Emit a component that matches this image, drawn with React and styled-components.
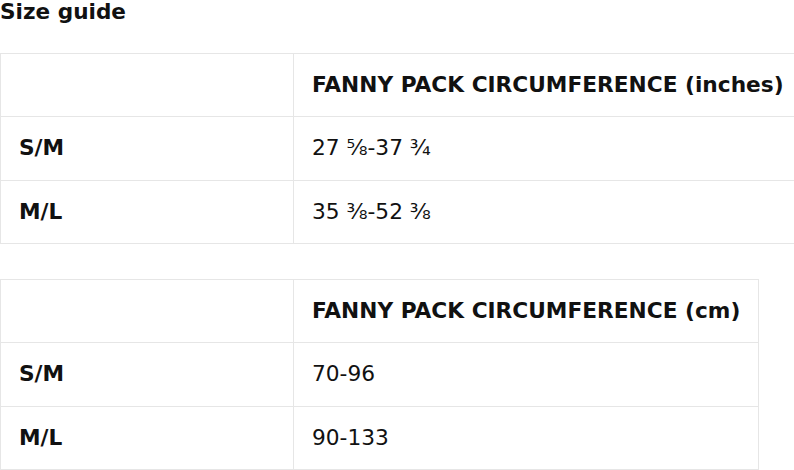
import React from "react";
import styled, { createGlobalStyle } from "styled-components";

const GlobalStyle = createGlobalStyle`
  body {
    margin: 0;
    background: #fff;
    color: #111;
    font-family: "DejaVu Sans", Verdana, sans-serif;
  }
`;

const Page = styled.div`
  display: flex;
  flex-direction: column;
  align-items: flex-start;
`;

const Title = styled.h3`
  margin: 0 0 29px;
  font-size: 21.6px;
  line-height: 24px;
  font-weight: bold;
`;

const Table = styled.table`
  border-collapse: collapse;
  margin-bottom: 35px;
  font-size: 21.7px;
  flex-shrink: 0;
`;

const Cell = styled.td`
  border: 1px solid #e6e6e6;
  padding: 16px 18px;
  line-height: 30.34px;
  text-align: left;
  white-space: nowrap;
  font-weight: ${(p) => (p.$bold ? "bold" : "normal")};
  width: ${(p) => (p.$first ? "256px" : "auto")};
  min-width: ${(p) => (p.$first ? "256px" : "0")};
`;

const guides = [
  {
    unit: "inches",
    rows: [
      ["S/M", "27 ⅝-37 ¾"],
      ["M/L", "35 ⅜-52 ⅜"],
    ],
  },
  {
    unit: "cm",
    rows: [
      ["S/M", "70-96"],
      ["M/L", "90-133"],
    ],
  },
];

function SizeTable({ unit, rows }) {
  return (
    <Table>
      <tbody>
        <tr>
          <Cell $first />
          <Cell $bold>FANNY PACK CIRCUMFERENCE ({unit})</Cell>
        </tr>
        {rows.map(([size, value]) => (
          <tr key={size}>
            <Cell $first $bold>
              {size}
            </Cell>
            <Cell>{value}</Cell>
          </tr>
        ))}
      </tbody>
    </Table>
  );
}

export default function App() {
  return (
    <Page>
      <GlobalStyle />
      <Title>Size guide</Title>
      {guides.map((g) => (
        <SizeTable key={g.unit} unit={g.unit} rows={g.rows} />
      ))}
    </Page>
  );
}
